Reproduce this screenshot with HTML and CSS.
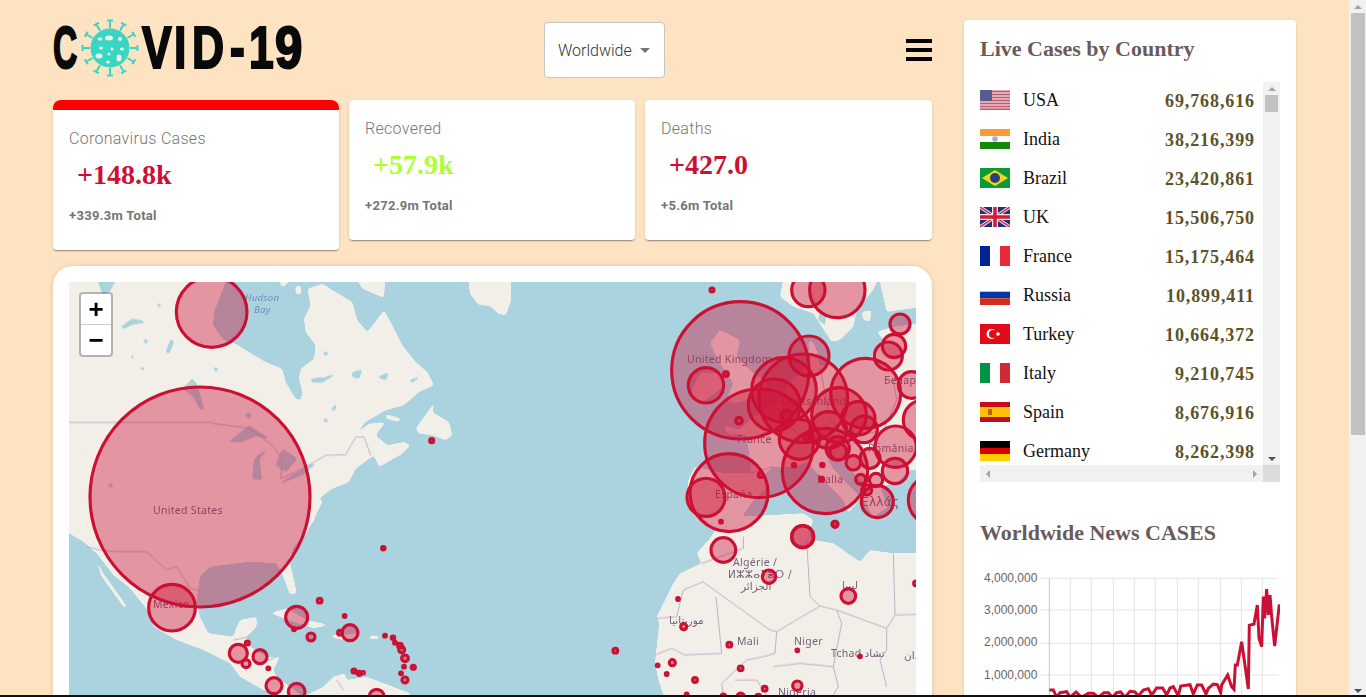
FILE: index.html
```html
<!DOCTYPE html>
<html lang="en">
<head>
	<meta charset="UTF-8">
	<title>COVID-19 Tracker</title>
	<link rel="stylesheet" href="styles.css">
</head>
<body>
<div class="app">
	<div class="left">
		<!-- header -->
		<div class="header">
			<div class="logo">
				<span class="logo-c">C</span>
				<svg class="virus" viewBox="0 0 60 60">
					<defs>
						<g id="spike"><path d="M30 10V2.500M27 2.500H33"/></g>
					</defs>
					<g class="virus-spikes">
						<use href="#spike"/>
						<use href="#spike" transform="rotate(30 30 30)"/>
						<use href="#spike" transform="rotate(60 30 30)"/>
						<use href="#spike" transform="rotate(90 30 30)"/>
						<use href="#spike" transform="rotate(120 30 30)"/>
						<use href="#spike" transform="rotate(150 30 30)"/>
						<use href="#spike" transform="rotate(180 30 30)"/>
						<use href="#spike" transform="rotate(210 30 30)"/>
						<use href="#spike" transform="rotate(240 30 30)"/>
						<use href="#spike" transform="rotate(270 30 30)"/>
						<use href="#spike" transform="rotate(300 30 30)"/>
						<use href="#spike" transform="rotate(330 30 30)"/>
					</g>
					<circle class="virus-body" cx="30" cy="30" r="19.500"/>
					<g class="virus-holes">
						<ellipse cx="29" cy="20" rx="4" ry="2.500"/>
						<ellipse cx="40" cy="21" rx="2" ry="2"/>
						<ellipse cx="20" cy="21" rx="2.500" ry="1.500"/>
						<ellipse cx="42" cy="31" rx="2" ry="1.500"/>
						<ellipse cx="32" cy="31" rx="1.500" ry="1.500"/>
						<ellipse cx="21" cy="30" rx="2" ry="1.500"/>
						<ellipse cx="19" cy="38" rx="3.500" ry="2.500"/>
						<ellipse cx="29" cy="36" rx="1.500" ry="1.500"/>
						<ellipse cx="39" cy="40" rx="2.500" ry="3.500"/>
						<ellipse cx="28" cy="44" rx="2" ry="1.500"/>
					</g>
				</svg>
				<span class="logo-rest"><span>V</span><span>I</span><span>D</span><span>-</span><span>1</span><span>9</span></span>
			</div>
			<div class="select">
				<span>Worldwide</span>
				<i class="caret"></i>
			</div>
			<div class="burger"><i></i><i></i><i></i></div>
		</div>

		<!-- stats -->
		<div class="stats">
			<div class="stat stat-active">
				<p class="stat-title">Coronavirus Cases</p>
				<h2 class="stat-value">+148.8k</h2>
				<p class="stat-total">+339.3m Total</p>
			</div>
			<div class="stat">
				<p class="stat-title">Recovered</p>
				<h2 class="stat-value green">+57.9k</h2>
				<p class="stat-total">+272.9m Total</p>
			</div>
			<div class="stat">
				<p class="stat-title">Deaths</p>
				<h2 class="stat-value">+427.0</h2>
				<p class="stat-total">+5.6m Total</p>
			</div>
		</div>

		<!-- map -->
		<div class="map-card">
			<div class="map">
				<svg class="map-svg" width="847" height="430" viewBox="0 0 847 430">
					<defs>
						<!-- rounds the corners of the coast polygons -->
						<filter id="coast" filterUnits="userSpaceOnUse" x="-50" y="-50" width="950" height="530" color-interpolation-filters="sRGB">
							<feGaussianBlur stdDeviation="1.600"/>
							<feComponentTransfer>
								<feFuncA type="linear" slope="8" intercept="-3.500"/>
							</feComponentTransfer>
						</filter>
						<filter id="shore" filterUnits="userSpaceOnUse" x="-100" y="-100" width="1500" height="900" color-interpolation-filters="sRGB">
							<feGaussianBlur stdDeviation="3"/>
							<feComponentTransfer>
								<feFuncA type="linear" slope="8" intercept="-3"/>
							</feComponentTransfer>
						</filter>
					</defs>
					<rect class="sea" width="847" height="430"/>

					<g filter="url(#coast)">
						<!-- north america, top half -->
						<g transform="scale(.33333)">
							<path class="land" d="M-60 -60L470 -60 470 0 435 90 432 130 465 175 500 185 540 210 590 240 640 260 650 300 680 350 695 355 700 330 690 290 695 260 735 230 740 190 710 150 705 110 725 70 715 20 760 5 800 30 850 60 865 115 895 150 945 85 970 130 1000 190 1040 240 1075 270 1095 310 1050 330 1005 370 950 385 890 420 850 465 900 425 950 420 920 460 955 490 1005 480 1025 490 1000 515 930 555 915 520 860 560 840 600 790 620 750 650 735 720 -60 720Z"/>
							<path class="land" d="M1040 440L1100 355 1090 390 1140 420 1150 460 1130 475 1090 460 1050 455Z"/>
							<path class="land" d="M950 396L998 410 988 420 952 410Z"/>
							<path class="land" d="M850 -30L950 -30 945 48 880 20Z"/>
							<path class="land" d="M620 -30L690 -30 640 18Z"/>
							<ellipse class="land" cx="688" cy="24" rx="9" ry="14"/>
						</g>
						<!-- greenland tip -->
						<g transform="translate(371 0) scale(.33333)">
							<path class="land" d="M78 -60L215 -60 212 60 198 100 175 95 150 72 115 68 90 35Z"/>
						</g>
						<!-- us south, mexico, caribbean -->
						<g transform="translate(-9 218) scale(.33333)">
							<path class="land" d="M-30 0L790 0 770 40 740 100 700 140 690 190 700 230 710 280 690 285 670 230 650 190 570 185 530 190 450 200 420 230 410 300 420 350 445 400 520 410 530 380 540 360 590 350 590 380 560 410 570 440 620 470 660 470 640 510 650 530 730 590 790 560 820 530 855 520 860 540 920 530 1050 580 1070 660 700 660 660 590 610 570 540 530 510 490 430 450 350 420 280 380 270 340 210 265 160 225 110 160 70 125 27 100 -30 90Z"/>
							<path class="land" d="M90 140L130 220 205 325 190 320 125 230Z"/>
							<path class="land" d="M630 340L680 325 740 360 810 375 760 385 700 365Z"/>
							<path class="land" d="M805 406L905 401 880 422 830 417Z"/>
							<path class="land" d="M928 406L957 408 957 418 928 418Z"/>
						</g>
						<!-- west and north africa -->
						<g transform="translate(531 238) scale(.33333)">
							<path class="land" d="M230 640L175 480 165 430 170 380 178 310 170 290 220 190 240 160 305 130 290 100 330 55 360 10 420 -10 520 -15 610 -20 640 0 625 50 640 60 700 70 780 125 810 90 880 100 1000 100 1000 640Z"/>
						</g>
						<!-- europe -->
						<g transform="translate(571 -12) scale(.33333)">
							<path class="land" d="M880 156L760 170 710 185 735 215 700 246 690 270 640 270 590 296 565 280 540 290 530 240 515 210 505 215 510 270 470 320 440 345 420 390 380 420 340 440 300 480 250 465 260 490 320 495 335 610 250 610 165 590 145 630 140 680 150 720 190 745 210 770 280 770 320 720 340 690 385 650 365 620 400 590 470 590 500 575 550 630 610 690 625 730 650 700 660 680 620 640 575 590 560 555 610 570 650 620 690 660 665 680 700 740 745 710 720 650 770 640 810 600 880 600Z"/>
							<path class="land" d="M440 -30L420 80 460 110 520 130 545 170 575 215 600 210 640 170 650 120 700 60 740 -30Z"/>
							<path class="land" d="M705 -30L740 126 880 106 880 -30Z"/>
							<path class="land" d="M240 180L300 210 290 260 340 310 385 340 350 385 280 400 260 390 280 340 240 280 210 220Z"/>
							<path class="land" d="M160 350L180 310 240 310 250 350 190 395 150 380Z"/>
							<path class="land" d="M665 125L695 120 690 155 670 150Z"/>
						</g>
					</g>

					<!-- lakes and borders -->
					<g transform="scale(.33333)">
						<g filter="url(#shore)">
							<path class="lake" d="M80 -20L150 -20 120 30 100 35Z"/>
							<path class="lake" d="M155 135L190 110 235 120 190 128 165 140Z"/>
							<path class="lake" d="M290 210L305 170 315 180 300 215Z"/>
							<path class="lake" d="M340 320L370 290 385 310 405 380 395 385 370 340Z"/>
							<path class="lake" d="M478 480L540 430 605 472 560 462 510 482Z"/>
							<path class="lake" d="M550 590L555 530 600 495 572 530 578 595Z"/>
							<path class="lake" d="M620 550L640 500 685 530 650 570Z"/>
							<path class="lake" d="M630 603L700 562 710 552 745 542 702 578 640 603Z"/>
							<path class="lake" d="M725 290L770 285 810 270 760 302 730 302Z"/>
							<path class="lake" d="M850 270L880 262 870 290 850 285Z"/>
							<path class="lake" d="M785 385L805 360 797 387Z"/>
							<path class="lake" d="M1020 295L1060 280 1030 302Z"/>
							<path class="lake" d="M925 285L960 270 950 295Z"/>
						</g>
						<circle class="lake" cx="538" cy="400" r="8"/>
						<circle class="lake" cx="220" cy="260" r="5"/>
						<circle class="lake" cx="125" cy="610" r="7"/>
						<circle class="lake" cx="770" cy="215" r="6"/>
						<circle class="lake" cx="440" cy="262" r="6"/>
						<circle class="lake" cx="885" cy="82" r="7"/>
						<circle class="lake" cx="230" cy="178" r="6"/>
						<circle class="lake" cx="190" cy="225" r="4"/>
						<circle class="lake" cx="270" cy="70" r="5"/>
						<circle class="lake" cx="770" cy="415" r="6"/>
						<path class="border" d="M0 421H425L435 425 540 438 610 490 640 530 635 590 710 555 770 520 830 518 860 465 885 465 905 520"/>
					</g>
					<g transform="translate(-9 218) scale(.33333)">
						<path class="border" d="M80 140L120 150 170 155 260 155 320 210 350 200 390 265 415 272"/>
						<path class="border" d="M520 420L570 410M600 490L650 470M830 540L850 570"/>
					</g>
					<g transform="translate(531 238) scale(.33333)">
						<path class="border" d="M308 185L510 330 530 335 660 258 710 270 860 325 885 285 948 283"/>
						<path class="border" d="M348 230L365 400 255 405 215 385 165 405"/>
						<path class="border" d="M530 335L525 400 490 410 440 420 365 490 370 525"/>
						<path class="border" d="M710 270L725 310 700 440 715 500 700 525"/>
						<path class="border" d="M860 325L860 390 840 420 860 500"/>
						<path class="border" d="M880 100L885 285M620 60L630 230 660 258"/>
						<path class="border" d="M250 210L310 185M250 210L230 290 170 295"/>
						<path class="border" d="M430 85L430 50M305 130L430 85"/>
						<path class="border" d="M520 440L600 430 700 440M405 480H470L500 525"/>
					</g>
					<g transform="translate(571 -12) scale(.33333)">
						<path class="lake" d="M540 120L560 130 555 165 535 150Z"/>
						<path class="border" d="M420 450L490 500 560 470 640 500 730 480 770 390 760 330 828 300"/>
						<path class="border" d="M330 610L400 590M540 290L570 450 640 520 720 520"/>
					</g>

					<!-- labels sit under the circles -->
					<g class="labels">
						<text x="84" y="232">United States</text>
						<text x="84" y="326">Mexico</text>
						<text x="618" y="81">United Kingdom</text>
						<text x="712" y="123">Deutschland</text>
						<text x="668" y="161">France</text>
						<text x="646" y="216">España</text>
						<text x="748" y="201">Italia</text>
						<text x="792" y="224" class="greek">Ελλάς</text>
						<text x="799" y="170">România</text>
						<text x="815" y="102">Беларусь</text>
						<text x="664" y="284">Algérie /</text>
						<text x="659" y="296" class="tifin">ⵍⵣⵣⴰⵢⴻⵔ /</text>
						<text x="672" y="308" class="arab">الجزائر</text>
						<text x="600" y="342" class="arab">موريتانيا</text>
						<text x="668" y="363">Mali</text>
						<text x="725" y="363">Niger</text>
						<text x="762" y="375">Tchad <tspan class="arab">تشاد</tspan></text>
						<text x="773" y="307" class="arab">ليبيا</text>
						<text x="835" y="377" class="arab">السودان</text>
						<text x="709" y="414">Nigeria</text>
						<text class="bay" x="176" y="19">Hudson</text>
						<text class="bay" x="185" y="31">Bay</text>
					</g>

					<!-- case circles -->
					<g class="circles" transform="scale(.33333)">
						<circle cx="393" cy="645" r="330"/>
						<circle cx="428" cy="90" r="106"/>
						<circle cx="1088" cy="476" r="6"/>
					</g>
					<g class="circles" transform="translate(-9 218) scale(.33333)">
						<circle cx="336" cy="323" r="70"/>
						<circle cx="970" cy="145" r="5"/><circle cx="710" cy="352" r="33"/><circle cx="702" cy="388" r="4"/>
						<circle cx="779" cy="302" r="7"/><circle cx="854" cy="348" r="4"/><circle cx="753" cy="411" r="12"/>
						<circle cx="870" cy="398" r="24"/><circle cx="840" cy="398" r="7"/><circle cx="975" cy="407" r="4"/>
						<circle cx="999" cy="413" r="5"/><circle cx="1005" cy="428" r="4"/><circle cx="1020" cy="437" r="7"/>
						<circle cx="1025" cy="449" r="9"/><circle cx="1035" cy="475" r="10"/><circle cx="1032" cy="500" r="4"/>
						<circle cx="1060" cy="502" r="6"/><circle cx="1023" cy="520" r="4"/><circle cx="1035" cy="540" r="9"/>
						<circle cx="562" cy="429" r="6"/><circle cx="535" cy="460" r="27"/><circle cx="558" cy="491" r="12"/>
						<circle cx="600" cy="470" r="21"/><circle cx="625" cy="505" r="4"/><circle cx="642" cy="557" r="24"/>
						<circle cx="710" cy="575" r="25"/><circle cx="950" cy="590" r="22"/><circle cx="882" cy="513" r="6"/>
						<circle cx="898" cy="520" r="6"/><circle cx="910" cy="518" r="3"/>
					</g>
					<g class="circles" transform="translate(531 238) scale(.33333)">
						<circle cx="370" cy="90" r="37"/><circle cx="608" cy="50" r="33"/><circle cx="507" cy="170" r="20"/>
						<circle cx="745" cy="228" r="22"/><circle cx="705" cy="13" r="9"/><circle cx="251" cy="320" r="9"/>
						<circle cx="234" cy="237" r="4"/><circle cx="46" cy="392" r="7"/><circle cx="217" cy="428" r="9"/>
						<circle cx="173" cy="436" r="4"/><circle cx="200" cy="462" r="4"/><circle cx="388" cy="374" r="7"/>
						<circle cx="422" cy="445" r="7"/><circle cx="592" cy="391" r="4"/><circle cx="780" cy="409" r="4"/>
						<circle cx="285" cy="480" r="7"/><circle cx="494" cy="506" r="7"/><circle cx="592" cy="497" r="14"/>
						<circle cx="260" cy="523" r="4"/><circle cx="370" cy="530" r="8"/><circle cx="422" cy="530" r="11"/>
						<circle cx="475" cy="530" r="7"/><circle cx="948" cy="190" r="7"/>
					</g>
					<g class="circles" transform="translate(571 -12) scale(.33333)">
						<circle cx="301" cy="301" r="206"/><circle cx="357" cy="520" r="163"/><circle cx="432" cy="360" r="97"/>
						<circle cx="490" cy="385" r="133"/><circle cx="403" cy="405" r="78"/><circle cx="440" cy="436" r="16"/>
						<circle cx="297" cy="452" r="10"/><circle cx="198" cy="346" r="53"/><circle cx="258" cy="312" r="7"/>
						<circle cx="267" cy="668" r="117"/><circle cx="198" cy="682" r="57"/><circle cx="555" cy="603" r="128"/>
						<circle cx="677" cy="370" r="105"/><circle cx="592" cy="60" r="83"/><circle cx="505" cy="60" r="50"/>
						<circle cx="507" cy="258" r="60"/><circle cx="478" cy="508" r="60"/><circle cx="597" cy="435" r="82"/>
						<circle cx="565" cy="480" r="55"/><circle cx="655" cy="445" r="50"/><circle cx="672" cy="478" r="40"/>
						<circle cx="593" cy="535" r="35"/><circle cx="595" cy="545" r="25"/><circle cx="767" cy="530" r="62"/>
						<circle cx="780" cy="162" r="30"/><circle cx="762" cy="228" r="35"/><circle cx="745" cy="258" r="42"/>
						<circle cx="815" cy="345" r="40"/><circle cx="850" cy="450" r="60"/><circle cx="765" cy="603" r="38"/>
						<circle cx="690" cy="565" r="30"/><circle cx="640" cy="578" r="22"/><circle cx="662" cy="628" r="15"/>
						<circle cx="708" cy="630" r="20"/><circle cx="680" cy="660" r="15"/><circle cx="712" cy="695" r="48"/>
						<circle cx="880" cy="690" r="75"/><circle cx="547" cy="585" r="5"/><circle cx="462" cy="586" r="5"/>
						<circle cx="545" cy="628" r="6"/><circle cx="362" cy="615" r="7"/><circle cx="243" cy="755" r="4"/>
						<circle cx="500" cy="502" r="8"/><circle cx="216" cy="60" r="6"/><circle cx="585" cy="762" r="8"/>
						<circle cx="488" cy="800" r="33"/>
					</g>
				</svg>
				<div class="zoom-box">
					<a class="zoom-btn">+</a>
					<a class="zoom-btn">&minus;</a>
				</div>
			</div>
		</div>
	</div>

	<!-- right panel -->
	<div class="panel">
		<h3 class="panel-title">Live Cases by Country</h3>
		<div class="list-box">
			<div class="list">
				<div class="row">
					<svg class="flag" viewBox="0 0 30 20">
						<rect width="30" height="20" fill="#e9c9cf"/>
						<path d="M0 1.500H30M0 4.500H30M0 7.500H30M0 10.500H30M0 13.500H30M0 16.500H30M0 19.300H30" stroke="#bf5a6c" stroke-width="1.500"/>
						<rect width="12" height="11" fill="#5a5a8e"/>
					</svg>
					<span class="name">USA</span><span class="num">69,768,616</span>
				</div>
				<div class="row">
					<svg class="flag" viewBox="0 0 30 20">
						<rect width="30" height="7" fill="#ff9933"/><rect y="7" width="30" height="6" fill="#fff"/><rect y="13" width="30" height="7" fill="#138808"/>
						<circle cx="15" cy="10" r="2.800" fill="#a9a9d8"/>
					</svg>
					<span class="name">India</span><span class="num">38,216,399</span>
				</div>
				<div class="row">
					<svg class="flag" viewBox="0 0 30 20">
						<rect width="30" height="20" fill="#0b9a3a"/><path d="M15 2L28 10 15 18 2 10Z" fill="#f2d90f"/>
						<circle cx="15" cy="10" r="5" fill="#2b3f86"/>
					</svg>
					<span class="name">Brazil</span><span class="num">23,420,861</span>
				</div>
				<div class="row">
					<svg class="flag" viewBox="0 0 30 20">
						<rect width="30" height="20" fill="#1f2f7c"/>
						<path d="M0 0L30 20M30 0L0 20" stroke="#e8d5da" stroke-width="3.500"/>
						<path d="M0 0L30 20M30 0L0 20" stroke="#c8203c" stroke-width="1.200"/>
						<path d="M15 0V20M0 10H30" stroke="#f3e6e8" stroke-width="6"/>
						<path d="M15 0V20M0 10H30" stroke="#d01c38" stroke-width="3.500"/>
					</svg>
					<span class="name">UK</span><span class="num">15,506,750</span>
				</div>
				<div class="row">
					<svg class="flag" viewBox="0 0 30 20">
						<rect width="10" height="20" fill="#002395"/><rect x="10" width="10" height="20" fill="#fff"/><rect x="20" width="10" height="20" fill="#ed2939"/>
					</svg>
					<span class="name">France</span><span class="num">15,175,464</span>
				</div>
				<div class="row">
					<svg class="flag" viewBox="0 0 30 20">
						<rect width="30" height="6.700" fill="#fff"/><rect y="6.700" width="30" height="6.600" fill="#0039a6"/><rect y="13.300" width="30" height="6.700" fill="#d52b1e"/>
					</svg>
					<span class="name">Russia</span><span class="num">10,899,411</span>
				</div>
				<div class="row">
					<svg class="flag" viewBox="0 0 30 20">
						<rect width="30" height="20" fill="#e30a17"/><circle cx="11.500" cy="10" r="5" fill="#fff"/><circle cx="13" cy="10" r="4" fill="#e30a17"/>
						<circle cx="18" cy="10" r="1.800" fill="#fff"/>
					</svg>
					<span class="name">Turkey</span><span class="num">10,664,372</span>
				</div>
				<div class="row">
					<svg class="flag" viewBox="0 0 30 20">
						<rect width="10" height="20" fill="#009246"/><rect x="10" width="10" height="20" fill="#fff"/><rect x="20" width="10" height="20" fill="#ce2b37"/>
					</svg>
					<span class="name">Italy</span><span class="num">9,210,745</span>
				</div>
				<div class="row">
					<svg class="flag" viewBox="0 0 30 20">
						<rect width="30" height="20" fill="#c60b1e"/><rect y="5" width="30" height="10" fill="#ffc400"/><rect x="8" y="7" width="4" height="6" fill="#b5651d"/>
					</svg>
					<span class="name">Spain</span><span class="num">8,676,916</span>
				</div>
				<div class="row">
					<svg class="flag" viewBox="0 0 30 20">
						<rect width="30" height="7" fill="#000"/><rect y="7" width="30" height="6" fill="#dd0000"/><rect y="13" width="30" height="7" fill="#ffce00"/>
					</svg>
					<span class="name">Germany</span><span class="num">8,262,398</span>
				</div>
			</div>
			<div class="vbar">
				<i class="arrow arrow-up"></i>
				<div class="vthumb"></div>
				<i class="arrow arrow-down"></i>
			</div>
			<div class="hbar">
				<i class="arrow arrow-left"></i>
				<i class="arrow arrow-right"></i>
			</div>
			<div class="corner"></div>
		</div>

		<h3 class="panel-title panel-title2">Worldwide News CASES</h3>
		<svg class="chart" width="300" height="130" viewBox="0 0 300 130">
			<g transform="translate(-20 -80) scale(.33333)">
				<path class="grid" d="M240 265H955M240 360H955M240 460H955M240 555H955"/>
				<path class="grid" d="M331 265V660M394 265V660M460 265V660M523 265V660M586 265V660M652 265V660M715 265V660M781 265V660M844 265V660M907 265V660"/>
				<path class="grid-zero" d="M268 265V660"/>
				<text class="tick" x="232" y="276">4,000,000</text>
				<text class="tick" x="232" y="372">3,000,000</text>
				<text class="tick" x="232" y="469">2,000,000</text>
				<text class="tick" x="232" y="566">1,000,000</text>
				<polyline class="line" points="268,600 280,600 290,622 300,608 320,605 330,622 348,606 365,622 385,610 400,610 415,622 432,608 445,608 457,622 470,608 482,606 495,622 510,604 525,606 535,618 550,600 565,596 575,615 590,594 608,594 620,615 630,594 640,590 655,618 662,588 690,584 700,612 712,585 725,585 738,612 745,595 760,582 772,584 782,608 785,585 803,555 815,590 822,598 826,525 832,525 845,455 865,597 868,406 882,402 892,345 897,445 905,470 910,320 914,385 920,297 925,375 930,315 935,380 944,468 958,343"/>
			</g>
		</svg>
	</div>
</div>

<!-- page scrollbar -->
<div class="pagebar">
	<i class="arrow arrow-up"></i>
	<div class="pagethumb"></div>
	<i class="arrow arrow-down"></i>
</div>
<div class="bottom-edge"></div>
</body>
</html>
```

FILE: styles.css
```css
* {
	box-sizing: border-box;
}
html, body {
	margin: 0;
	height: 697px;
	overflow: hidden;
}
body {
	display: flex;
	background: #fee3c3;
	font-family: "Roboto", "Liberation Sans", sans-serif;
}
.app {
	flex: 1;
	display: flex;
	align-items: flex-start;
	gap: 32px;
	padding: 20px 53px 0;
	min-width: 0;
}
.left {
	flex: 1;
	min-width: 0;
}

/* header */
.header {
	display: flex;
	justify-content: space-between;
	align-items: center;
	height: 60px;
	margin-bottom: 20px;
}
.logo {
	width: 250px;
	height: 55px;
	display: flex;
	align-items: center;
	margin-top: -5px;
	color: #0a0a0a;
	font: bold 60px/55px "Liberation Sans", sans-serif;
	-webkit-text-stroke: 2.200px #0a0a0a;
}
.logo-c {
	width: 31px;
	transform: scaleX(.56);
	transform-origin: left center;
}
.virus {
	width: 60px;
	height: 60px;
	margin-left: -4px;
	flex: none;
}
.virus-spikes {
	fill: none;
	stroke: #3ad6c5;
	stroke-width: 2;
}
.virus-body {
	fill: #3ad6c5;
}
.virus-holes {
	fill: #ecf3dd;
}
.logo-rest {
	display: flex;
	margin-left: 2px;
}
.logo-rest span {
	transform: scaleX(.74);
	transform-origin: left center;
}
.logo-rest span:nth-child(1) {
	width: 32px;
}
.logo-rest span:nth-child(2) {
	width: 18px;
}
.logo-rest span:nth-child(3) {
	width: 38px;
}
.logo-rest span:nth-child(4) {
	width: 19px;
}
.logo-rest span:nth-child(5) {
	width: 26px;
}
.logo-rest span:nth-child(6) {
	transform: scaleX(.82);
}
.select {
	width: 121px;
	height: 56px;
	display: flex;
	align-items: center;
	gap: 8px;
	padding-left: 13px;
	background: #fff;
	border: 1px solid #c4c4c4;
	border-radius: 4px;
	color: #333;
	font-size: 16px;
	font-weight: 300;
}
.caret {
	width: 0;
	height: 0;
	border-left: 5px solid transparent;
	border-right: 5px solid transparent;
	border-top: 5px solid #757575;
}
.burger {
	width: 26px;
	display: flex;
	flex-direction: column;
	gap: 5px;
}
.burger i {
	display: block;
	height: 4px;
	background: #000;
}

/* stat cards */
.stats {
	display: flex;
	align-items: flex-start;
	gap: 10px;
}
.stat {
	width: 286px;
	flex: none;
	padding: 17px 16px 25px;
	background: #fff;
	border-radius: 4px;
	box-shadow: 0 2px 1px -1px rgba(0,0,0,.2), 0 1px 1px rgba(0,0,0,.14), 0 1px 3px rgba(0,0,0,.12);
}
.stat:last-child {
	flex: 1;
}
.stat-active {
	border-top: 10px solid #ff0000;
	border-radius: 8px 8px 4px 4px;
}
.stat-title {
	margin: 0;
	color: #757575;
	font-size: 16px;
	font-weight: 300;
	line-height: 24px;
	letter-spacing: .3px;
}
.stat-value {
	margin: 8px 0 16px 8px;
	color: #cc1034;
	font: bold 28px/32px "Liberation Serif", serif;
}
.green {
	color: #adff2f;
}
.stat-total {
	margin: 0;
	color: #757575;
	font-size: 13px;
	font-weight: 700;
	line-height: 18px;
	letter-spacing: .3px;
}

/* map */
.map-card {
	margin-top: 16px;
	padding: 16px;
	background: #fff;
	border-radius: 20px;
	box-shadow: 0 0 8px -4px rgba(0,0,0,.4);
}
.map {
	position: relative;
	height: 430px;
	overflow: hidden;
}
.map-svg {
	display: block;
}
.sea {
	fill: #aad3df;
}
.land {
	fill: #f2efe9;
}
.lake {
	fill: #aad3df;
}
.border {
	fill: none;
	stroke: #c2aec4;
	stroke-width: 3;
}
.labels text {
	fill: #75607c;
	font: 10.500px "Noto Sans", "DejaVu Sans", sans-serif;
	letter-spacing: .3px;
}
.labels .arab, .labels .tifin, .labels .greek {
	font-family: "DejaVu Sans", sans-serif;
}
.labels .greek {
	font-size: 12px;
}
.labels .bay {
	fill: #6b8fbf;
	font-size: 9.500px;
	font-style: italic;
}
.circles circle {
	fill: #cc1034;
	fill-opacity: .4;
	stroke: #cc1034;
	stroke-width: 9.500;
}
.zoom-box {
	position: absolute;
	top: 10px;
	left: 10px;
	width: 34px;
	background: #fff;
	border: 2px solid rgba(0,0,0,.25);
	border-radius: 4px;
	background-clip: padding-box;
}
.zoom-btn {
	display: block;
	height: 30px;
	color: #000;
	text-align: center;
	font: bold 26px/30px "Liberation Sans", sans-serif;
}
.zoom-btn:first-child {
	border-bottom: 1px solid #ccc;
	height: 31px;
}

/* right panel */
.panel {
	width: 332px;
	flex: none;
	padding: 16px;
	background: #fff;
	border-radius: 4px;
	box-shadow: 0 2px 1px -1px rgba(0,0,0,.2), 0 1px 1px rgba(0,0,0,.14), 0 1px 3px rgba(0,0,0,.12);
}
.panel-title {
	margin: 0;
	color: #6a5b5b;
	font: bold 22px/26px "Liberation Serif", serif;
}
.panel-title2 {
	margin-top: 38px;
}
.list-box {
	display: grid;
	grid-template-columns: 283px 17px;
	grid-template-rows: 383px 17px;
	margin-top: 20px;
}
.list {
	display: flex;
	flex-direction: column;
	gap: 3px;
	overflow: hidden;
}
.row {
	display: flex;
	align-items: center;
	flex: none;
	height: 36px;
	padding-right: 8px;
	font-family: "Liberation Serif", serif;
}
.flag {
	width: 30px;
	height: 20px;
	flex: none;
	margin-right: 13px;
}
.name {
	flex: 1;
	color: #111;
	font-size: 18px;
}
.num {
	padding-top: 3px;
	color: #5c5228;
	font-size: 18px;
	font-weight: bold;
	letter-spacing: .9px;
}
.vbar {
	display: flex;
	flex-direction: column;
	align-items: center;
	background: #f1f1f1;
}
.hbar {
	display: flex;
	justify-content: space-between;
	align-items: center;
	padding: 0 6px;
	background: #f1f1f1;
}
.corner {
	background: #dcdcdc;
}
.vthumb {
	width: 13px;
	height: 17px;
	background: #c1c1c1;
	margin-bottom: auto;
}
.arrow {
	display: block;
	width: 0;
	height: 0;
	flex: none;
	border: 4px solid transparent;
}
.arrow-up {
	margin: 5px 0 4px;
	border-top: 0;
	border-bottom: 4px solid #a3a3a3;
}
.arrow-down {
	margin: 5px 0 4px;
	border-bottom: 0;
	border-top: 4px solid #505050;
}
.arrow-left {
	border-left: 0;
	border-right: 4px solid #a3a3a3;
}
.arrow-right {
	border-right: 0;
	border-left: 4px solid #a3a3a3;
}
.chart {
	display: block;
	margin-top: 24px;
}
.grid {
	fill: none;
	stroke: #e4e4e4;
	stroke-width: 3;
}
.grid-zero {
	fill: none;
	stroke: #c8c8c8;
	stroke-width: 3;
}
.tick {
	fill: #666;
	font: 36px "Liberation Sans", sans-serif;
	text-anchor: end;
}
.line {
	fill: none;
	stroke: #cc1034;
	stroke-width: 9;
}

/* page scrollbar */
.pagebar {
	width: 17px;
	flex: none;
	display: flex;
	flex-direction: column;
	align-items: center;
	background: #f1f1f1;
}
.pagethumb {
	width: 14px;
	height: 422px;
	background: #c1c1c1;
	margin-bottom: auto;
}
.bottom-edge {
	position: fixed;
	left: 0;
	right: 0;
	bottom: 0;
	height: 2px;
	background: #111;
}
```
